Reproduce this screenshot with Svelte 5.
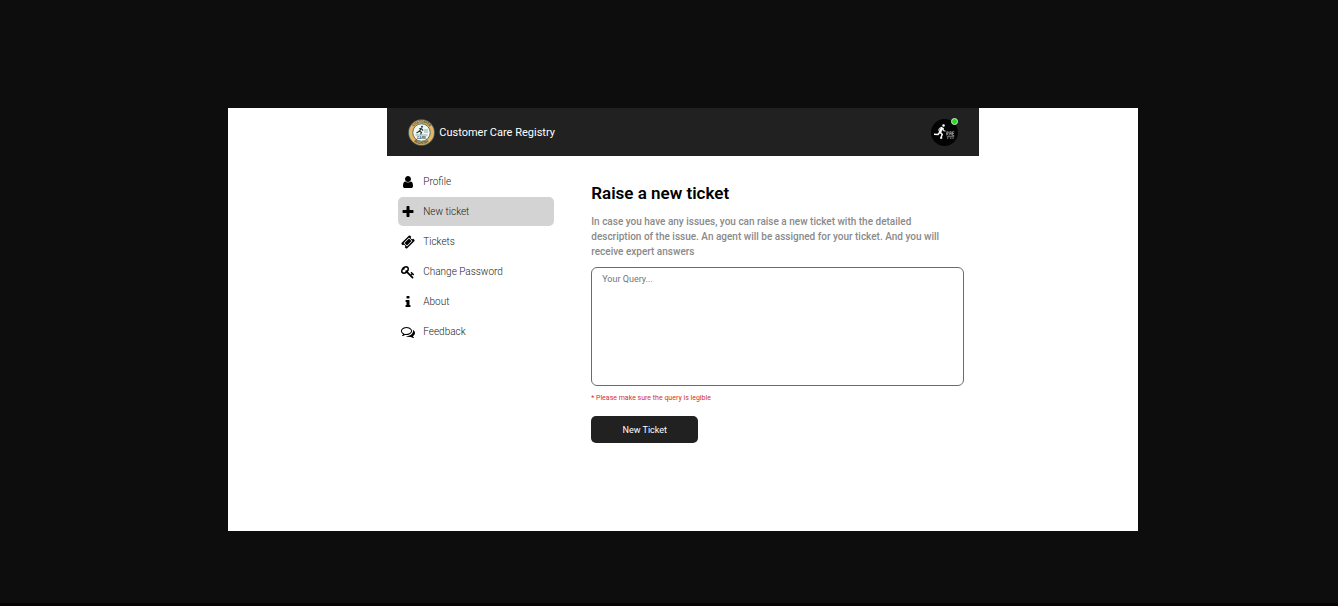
<script>
  let selected = $state('New ticket');
  let query = $state('');

  const items = [
    {
      label: 'Profile',
      path: 'M1536 1399q0 109-62.5 187t-150.5 78h-854q-88 0-150.5-78t-62.5-187q0-85 8.5-160.5t31.5-152 58.5-131 94-89 134.5-34.5q131 128 313 128t313-128q76 0 134.5 34.5t94 89 58.5 131 31.5 152 8.5 160.5zm-256-887q0 159-112.5 271.5t-271.5 112.5-271.5-112.5-112.5-271.5 112.5-271.5 271.5-112.5 271.5 112.5 112.5 271.5z'
    },
    {
      label: 'New ticket',
      path: 'M1600 736v192q0 40-28 68t-68 28h-416v416q0 40-28 68t-68 28h-192q-40 0-68-28t-28-68v-416h-416q-40 0-68-28t-28-68v-192q0-40 28-68t68-28h416v-416q0-40 28-68t68-28h192q40 0 68 28t28 68v416h416q40 0 68 28t28 68z'
    },
    {
      label: 'Tickets',
      path: 'M1024 452l316 316-572 572-316-316zm-211 979l618-618q19-19 19-45t-19-45l-362-362q-18-18-45-18t-45 18l-618 618q-19 19-19 45t19 45l362 362q18 18 45 18t45-18zm889-637l-907 908q-37 37-90.5 37t-90.5-37l-126-126q56-56 56-136t-56-136-136-56-136 56l-125-126q-37-37-37-90.5t37-90.5l907-906q37-37 90.5-37t90.5 37l125 125q-56 56-56 136t56 136 136 56 136-56l126 125q37 37 37 90.5t-37 90.5z'
    },
    {
      label: 'Change Password',
      path: 'M832 512q0-80-56-136t-136-56-136 56-56 136q0 42 19 83-41-19-83-19-80 0-136 56t-56 136 56 136 136 56 136-56 56-136q0-42-19-83 41 19 83 19 80 0 136-56t56-136zm851 704q0 17-49 66t-66 49q-9 0-28.5-16t-36.5-33-38.5-40-24.5-26l-96 96 220 220q28 28 28 68 0 42-39 81t-81 39q-40 0-68-28l-671-671q-176 131-365 131-163 0-265.5-102.5t-102.5-265.5q0-160 95-313t248-248 313-95q163 0 265.5 102.5t102.5 265.5q0 189-131 365l355 355 96-96q-3-3-26-24.5t-40-38.5-33-36.5-16-28.5q0-17 49-66t66-49q13 0 23 10 6 6 46 44.5t82 79.5 86.5 86 73 78 28.5 41z'
    },
    {
      label: 'About',
      path: 'M1216 1344v128q0 26-19 45t-45 19h-512q-26 0-45-19t-19-45v-128q0-26 19-45t45-19h64v-384h-64q-26 0-45-19t-19-45v-128q0-26 19-45t45-19h384q26 0 45 19t19 45v576h64q26 0 45 19t19 45zm-128-1152v192q0 26-19 45t-45 19h-256q-26 0-45-19t-19-45v-192q0-26 19-45t45-19h256q26 0 45 19t19 45z'
    },
    {
      label: 'Feedback',
      path: 'M704 384q-153 0-286 52t-211.5 141-78.5 191q0 82 53 158t149 132l97 56-35 84q34-20 62-39l44-31 53 10q78 14 153 14 153 0 286-52t211.5-141 78.5-191-78.5-191-211.5-141-286-52zm0-128q191 0 353.5 68.5t256.5 186.5 94 257-94 257-256.5 186.5-353.5 68.5q-86 0-176-16-124 88-278 128-36 9-86 16h-3q-11 0-20.5-8t-11.5-21q-1-3-1-6.5t.5-6.5 2-6l2.5-5 3.5-5.5 4-5 4.5-5 4-4.5q5-6 23-25t26-29.5 22.5-29 25-38.5 20.5-44q-124-72-195-177t-71-224q0-139 94-257t256.5-186.5 353.5-68.5zm822 1169q10 24 20.5 44t25 38.5 22.5 29 26 29.5 23 25q1 1 4 4.5t4.5 5 4 5 3.5 5.5l2.5 5 2 6 .5 6.5-1 6.5q-3 14-13 22t-22 7q-50-7-86-16-154-40-278-128-90 16-176 16-271 0-472-132 58 4 88 4 161 0 309-45t264-129q125-92 192-212t67-254q0-77-23-152 129 71 204 178t75 230q0 120-71 224.5t-195 176.5z'
    }
  ];
</script>

<div class="backdrop">
  <div class="page">
    <div class="app">
      <header>
        <svg class="logo" viewBox="0 0 108 108" aria-hidden="true">
          <circle cx="54" cy="54" r="53" fill="#56706a" />
          <circle cx="54" cy="54" r="50" fill="#e3b565" />
          <circle cx="54" cy="54" r="35" fill="#f4f6f2" stroke="#4f7470" stroke-width="4" />
          <path id="seal-top" d="M15 54a39 39 0 0 1 78 0" fill="none" />
          <path id="seal-bottom" d="M7 54a47 47 0 0 0 94 0" fill="none" />
          <g font-size="14" font-weight="700" fill="#4b4530" text-anchor="middle">
            <text><textPath href="#seal-top" startOffset="50%">CUSTOMER</textPath></text>
            <text><textPath href="#seal-bottom" startOffset="50%">REGISTRY</textPath></text>
            <text x="54" y="78" font-size="14" fill="#315954">CARE</text>
          </g>
          <circle cx="56" cy="31" r="4" fill="#253e3d" />
          <path d="M54 37L46 48L34 56M46 48L54 54L50 62M54 38L60 46M53 37L45 39" fill="none" stroke="#253e3d" stroke-width="5" />
          <path d="M64 44h16M64 52h16M30 64h48" stroke="#61a08d" stroke-width="3" />
        </svg>
        <span class="brand">Customer Care Registry</span>
        <button class="avatar" aria-label="Account">
          <svg viewBox="0 0 108 108" aria-hidden="true">
            <circle cx="54" cy="54" r="54" fill="#030303" />
            <circle cx="50" cy="26" r="5" fill="#fff" />
            <g fill="none" stroke="#fff" stroke-linejoin="round">
              <path d="M46 34L35 53" stroke-width="10" />
              <path d="M36 52L28 62L12 61M36 52L45 62L39 76H45" stroke-width="6" />
              <path d="M48 35L50 47L58 48M44 33L34 37L30 46" stroke-width="4" />
            </g>
            <path d="M63 66V51h6v6h-6l7 9M75 66V51h6v15M75 58h6M86 51v15h7M86 51h7M86 58h6M63 71h30M67 74v6M76 77h6M88 74v6" fill="none" stroke="#aaa" stroke-width="3" />
          </svg>
          <span class="status"></span>
        </button>
      </header>
      <div class="body">
        <nav>
          {#each items as item}
            <button class="item" class:active={selected === item.label} onclick={() => (selected = item.label)}>
              <svg viewBox="0 0 1792 1792" aria-hidden="true"><path d={item.path} /></svg>
              <span>{item.label}</span>
            </button>
          {/each}
        </nav>
        <main>
          <h1>Raise a new ticket</h1>
          <label for="query">In case you have any issues, you can raise a new ticket with the detailed description of the issue. An agent will be assigned for your ticket. And you will receive expert answers</label>
          <textarea id="query" placeholder="Your Query..." bind:value={query}></textarea>
          <p class="note">* Please make sure the query is legible</p>
          <button class="submit">New Ticket</button>
        </main>
      </div>
    </div>
  </div>
</div>

<style>
  :global(body) {
    margin: 0;
    background: #0d0d0d;
  }
  .backdrop {
    box-sizing: border-box;
    display: flex;
    min-height: 100vh;
    padding: 108px 200px 72px 228px;
    border-bottom: 3px solid #080005;
    background: #0d0d0d;
    font-family: Roboto, sans-serif;
  }
  .page {
    flex: 1;
    background: #fff;
  }
  .app {
    width: 65%;
    margin: 0 auto;
  }
  button {
    border: 0;
    font-family: inherit;
    cursor: pointer;
  }
  header {
    display: flex;
    align-items: center;
    gap: 4px;
    height: 48px;
    padding: 0 21px;
    background: #212121;
    color: #fff;
  }
  .logo {
    width: 27px;
    height: 27px;
  }
  .brand {
    font-size: 11px;
  }
  .avatar {
    position: relative;
    width: 27px;
    height: 27px;
    margin-left: auto;
    padding: 0;
    background: none;
  }
  .avatar svg {
    display: block;
  }
  .status {
    position: absolute;
    top: -1px;
    right: 0;
    width: 5px;
    height: 5px;
    border: 1px solid #c9efc9;
    border-radius: 50%;
    background: #1fe01f;
  }
  .body {
    display: flex;
    gap: 37px;
    padding: 11px 15px 0 11px;
  }
  nav {
    display: flex;
    flex-direction: column;
    flex: 0 0 156px;
    gap: 1px;
  }
  .item {
    display: flex;
    align-items: center;
    gap: 8px;
    height: 29px;
    padding: 0 3px;
    border-radius: 5px;
    background: none;
    color: #222;
    font-size: 10px;
    font-weight: 300;
  }
  .item.active {
    background: #d3d3d3;
  }
  .item svg {
    width: 14px;
    height: 14px;
    fill: #000;
  }
  main {
    flex: 1;
    padding-top: 16px;
  }
  h1 {
    margin: 0 0 11px;
    font-size: 17px;
    font-weight: 600;
    line-height: 20px;
  }
  label {
    display: block;
    margin-bottom: 8px;
    padding-right: 16px;
    color: #8a8a8a;
    font-size: 10px;
    font-weight: 500;
    line-height: 15px;
  }
  textarea {
    box-sizing: border-box;
    display: block;
    width: 100%;
    height: 119px;
    padding: 5px 10px;
    border: 1px solid #6b6b6b;
    border-radius: 6px;
    outline: 0;
    resize: none;
    font-family: inherit;
    font-size: 9px;
    line-height: 12px;
  }
  textarea::placeholder {
    color: #757575;
  }
  .note {
    margin: 7px 0 13px;
    color: #d32f2f;
    font-size: 7px;
    line-height: 10px;
  }
  .submit {
    width: 107px;
    height: 27px;
    padding: 0;
    border-radius: 5px;
    background: #212121;
    color: #fff;
    font-size: 9px;
  }
</style>
